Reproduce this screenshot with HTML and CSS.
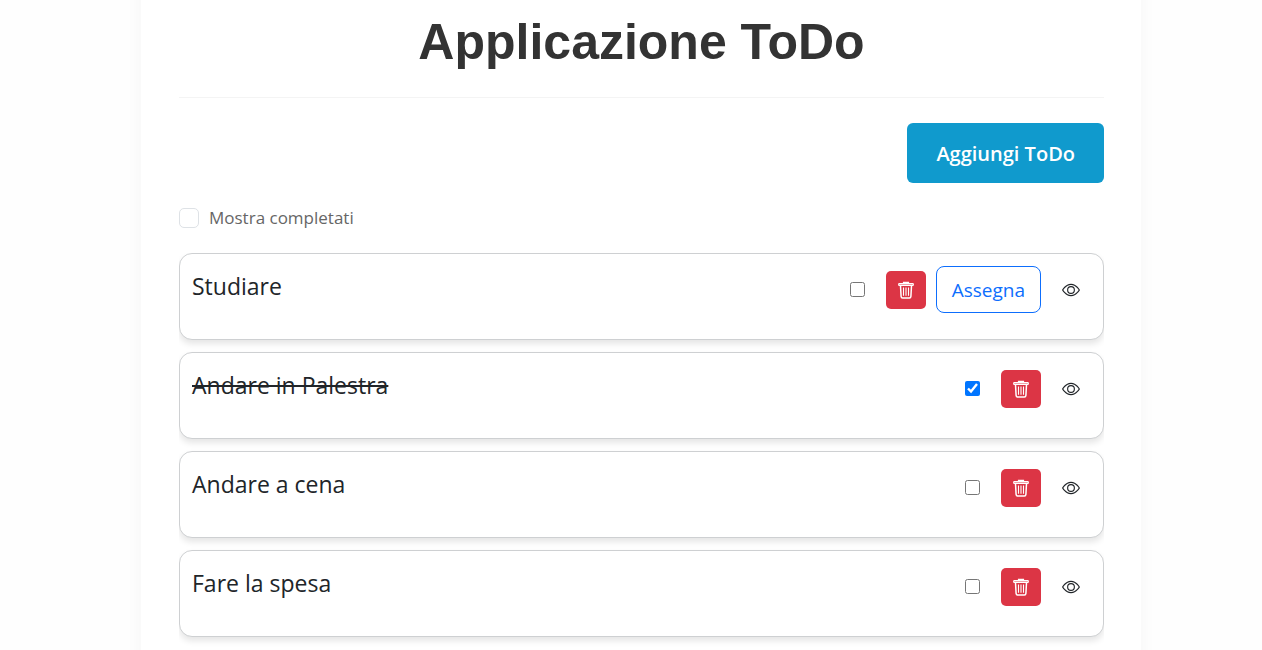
FILE: index.html
```html
<!DOCTYPE html>
<html lang="it">
<head>
<meta charset="utf-8">
<meta name="viewport" content="width=device-width, initial-scale=1">
<title>Applicazione ToDo</title>
<link rel="stylesheet" href="styles.css">
</head>
<body>
<svg class="sprite" aria-hidden="true">
  <symbol id="trash" viewBox="0 0 18 18">
    <g fill="none" stroke="currentColor">
      <path d="M6.500 2.500v-1.200h5v1.200" stroke-width="1.200"/>
      <rect x="1.700" y="2.500" width="14.600" height="2" rx=".6" stroke-width="1.100" fill="currentColor" fill-opacity=".55"/>
      <path d="M3.500 4.800l.6 10.700q.1 1.500 1.500 1.500h6.800q1.400 0 1.500-1.500l.6-10.700" stroke-width="1.500"/>
      <path d="M6.500 6.500v8.300M9 6.500v8.300M11.500 6.500v8.300" stroke-width="1.100"/>
    </g>
  </symbol>
  <symbol id="eye" viewBox="0 0 16 16">
    <path d="M16 8s-3-5.500-8-5.500S0 8 0 8s3 5.500 8 5.500S16 8 16 8M1.173 8a13 13 0 0 1 1.660-2.043C4.120 4.668 5.880 3.500 8 3.500s3.879 1.168 5.168 2.457A13 13 0 0 1 14.828 8q-.086.130-.195.288c-.335.480-.830 1.120-1.465 1.755C11.879 11.332 10.119 12.500 8 12.500s-3.879-1.168-5.168-2.457A13 13 0 0 1 1.172 8z"/>
    <path d="M8 5.500a2.500 2.500 0 1 0 0 5 2.500 2.500 0 0 0 0-5M4.500 8a3.500 3.500 0 1 1 7 0 3.500 3.500 0 0 1-7 0"/>
  </symbol>
</svg>
<div class="page">
  <main class="panel">
    <h1 class="title">Applicazione ToDo</h1>
    <div class="toolbar"><button class="add" type="button">Aggiungi ToDo</button></div>
    <label class="filter"><input class="filter-box" type="checkbox">Mostra completati</label>
    <ul class="list">
      <li class="card">
        <span class="name">Studiare</span>
        <div class="actions">
          <input class="done" type="checkbox" aria-label="Completa Studiare">
          <button class="delete" type="button" aria-label="Elimina"><svg class="icon"><use href="#trash"/></svg></button>
          <button class="assign" type="button">Assegna</button>
          <button class="view" type="button" aria-label="Dettagli"><svg class="icon"><use href="#eye"/></svg></button>
        </div>
      </li>
      <li class="card">
        <span class="name completed">Andare in Palestra</span>
        <div class="actions">
          <input class="done" type="checkbox" aria-label="Completa Andare in Palestra" checked>
          <button class="delete" type="button" aria-label="Elimina"><svg class="icon"><use href="#trash"/></svg></button>
          <button class="view" type="button" aria-label="Dettagli"><svg class="icon"><use href="#eye"/></svg></button>
        </div>
      </li>
      <li class="card">
        <span class="name">Andare a cena</span>
        <div class="actions">
          <input class="done" type="checkbox" aria-label="Completa Andare a cena">
          <button class="delete" type="button" aria-label="Elimina"><svg class="icon"><use href="#trash"/></svg></button>
          <button class="view" type="button" aria-label="Dettagli"><svg class="icon"><use href="#eye"/></svg></button>
        </div>
      </li>
      <li class="card">
        <span class="name">Fare la spesa</span>
        <div class="actions">
          <input class="done" type="checkbox" aria-label="Completa Fare la spesa">
          <button class="delete" type="button" aria-label="Elimina"><svg class="icon"><use href="#trash"/></svg></button>
          <button class="view" type="button" aria-label="Dettagli"><svg class="icon"><use href="#eye"/></svg></button>
        </div>
      </li>
    </ul>
  </main>
</div>
</body>
</html>
```
FILE: styles.css
```css
* { box-sizing: border-box; }

body {
  margin: 0;
  background: #fefefe;
  color: #212529;
  font-family: "Segoe UI", "Open Sans", "Noto Sans", sans-serif;
}

button { font-family: inherit; cursor: pointer; }

.sprite { display: none; }

.page {
  display: flex;
  justify-content: center;
  min-height: 100vh;
  padding-left: 20px;
  overflow: hidden;
}

/* The panel runs past both edges of the page so only its side shadows show. */
.panel {
  flex: 1;
  max-width: 1000px;
  margin: -40px 0;
  padding: 52px 37px 40px 38px;
  background: #fff;
  box-shadow: 0 0 16px rgba(0, 0, 0, 0.04);
}

.title {
  margin: 0 0 25px;
  padding-bottom: 25px;
  border-bottom: 1px solid #f4f4f4;
  color: #333;
  font: bold 50px/60px "Liberation Sans", Arial, sans-serif;
  text-align: center;
}

.toolbar { display: flex; justify-content: flex-end; }

.add {
  padding: 16px 29px 14px;
  border: 0;
  border-radius: 6px;
  background: #109acd;
  color: #fff;
  font-size: 20px;
  font-weight: 600;
  line-height: 30px;
}

.filter {
  display: flex;
  align-items: center;
  gap: 10px;
  width: fit-content;
  margin: 20px 0;
  color: #666;
  font-size: 17px;
  line-height: 30px;
}

.filter-box {
  appearance: none;
  width: 20px;
  height: 20px;
  margin: 0;
  border: 1px solid #dee2e6;
  border-radius: 5px;
  background: #fff;
}

.filter-box:checked { background: #0d6efd; }

.list {
  display: grid;
  gap: 12px;
  margin: 0;
  padding: 0 0 12px;
  overflow: hidden;
  list-style: none;
}

.card {
  display: flex;
  justify-content: space-between;
  align-items: flex-start;
  padding: 12px 12px 26px;
  border: 1px solid #ced0d2;
  border-radius: 13px;
  background: #fff;
  box-shadow: 0 4px 6px rgba(0, 0, 0, 0.1);
}

.name { font-size: 23px; line-height: 41px; }

.completed { text-decoration: line-through 2px; }

.actions { display: flex; align-items: center; min-height: 47px; }

.done { width: 15px; height: 15px; margin: 0 21px 0 0; }

.delete {
  display: grid;
  place-items: center;
  width: 40px;
  height: 38px;
  padding: 0;
  border: 0;
  border-radius: 5px;
  background: #dc3545;
  color: #fff;
}

.assign {
  margin-left: 10px;
  padding: 9px 15px 7px;
  border: 1px solid #0d6efd;
  border-radius: 8px;
  background: #fff;
  color: #0d6efd;
  font-size: 19px;
  line-height: 29px;
}

.view {
  display: grid;
  place-items: center;
  margin-left: 10px;
  padding: 10px 11px;
  border: 0;
  background: none;
  color: #212529;
}

.icon { display: block; width: 18px; height: 18px; fill: currentColor; }
```
